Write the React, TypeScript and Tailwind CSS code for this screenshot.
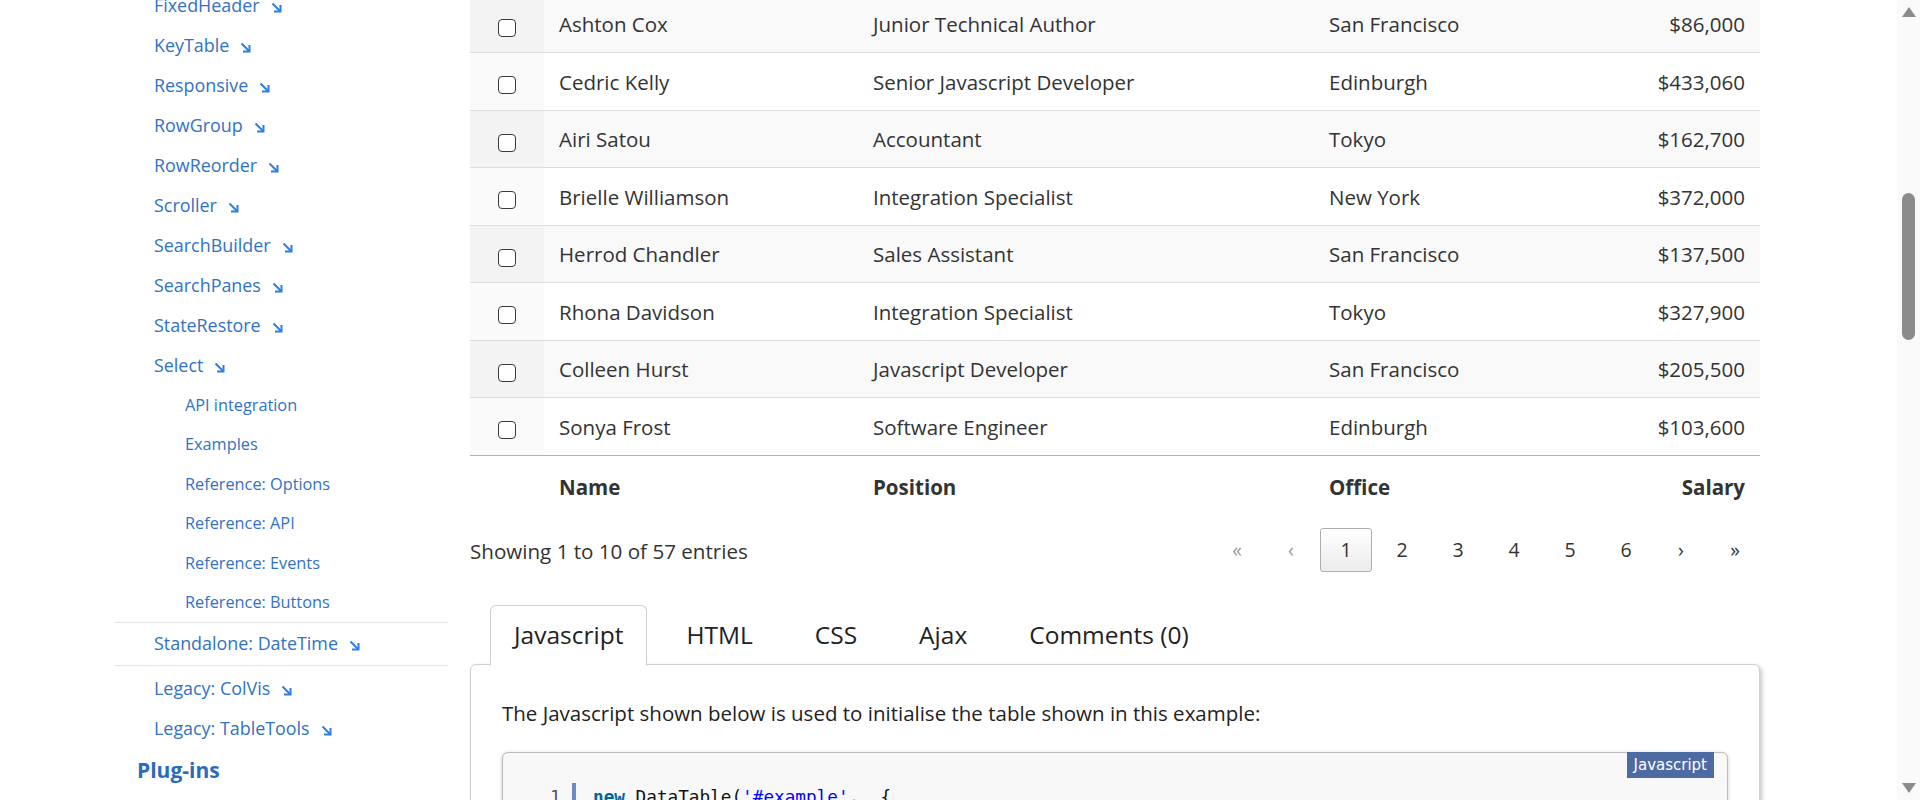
import React from 'react';

const rows = [
  ['Ashton Cox', 'Junior Technical Author', 'San Francisco', '$86,000'],
  ['Cedric Kelly', 'Senior Javascript Developer', 'Edinburgh', '$433,060'],
  ['Airi Satou', 'Accountant', 'Tokyo', '$162,700'],
  ['Brielle Williamson', 'Integration Specialist', 'New York', '$372,000'],
  ['Herrod Chandler', 'Sales Assistant', 'San Francisco', '$137,500'],
  ['Rhona Davidson', 'Integration Specialist', 'Tokyo', '$327,900'],
  ['Colleen Hurst', 'Javascript Developer', 'San Francisco', '$205,500'],
  ['Sonya Frost', 'Software Engineer', 'Edinburgh', '$103,600'],
];

const extensions = [
  'FixedHeader',
  'KeyTable',
  'Responsive',
  'RowGroup',
  'RowReorder',
  'Scroller',
  'SearchBuilder',
  'SearchPanes',
  'StateRestore',
  'Select',
];

const selectPages = [
  'API integration',
  'Examples',
  'Reference: Options',
  'Reference: API',
  'Reference: Events',
  'Reference: Buttons',
];

function Arrow() {
  return (
    <svg width="11" height="11" viewBox="0 0 11 11" className="ml-[11px] mt-[3px] shrink-0">
      <path d="M1.5 1.5 L9 9" stroke="#2b7de9" strokeWidth="2" fill="none" />
      <path d="M9.5 3 V9.5 H3" stroke="#2b7de9" strokeWidth="2" fill="none" />
    </svg>
  );
}

function NavLink({ label, arrow = true }: { label: string; arrow?: boolean }) {
  return (
    <div className="h-[40px] flex items-center pl-[39px] text-[17.9px] text-[#3172c4]">
      <span>{label}</span>
      {arrow && <Arrow />}
    </div>
  );
}

function Sidebar() {
  return (
    <div className="w-[448px] shrink-0 pl-[115px] -mt-[14.5px]">
      {extensions.map((e) => (
        <NavLink key={e} label={e} />
      ))}
      {selectPages.map((p) => (
        <div key={p} className="h-[39.4px] flex items-center pl-[70px] text-[16.3px] text-[#3172c4]">
          {p}
        </div>
      ))}
      <div className="border-t border-[#e6e6e6] h-[43px] flex items-center pl-[39px] text-[17.9px] text-[#3172c4]">
        <span>Standalone: DateTime</span>
        <Arrow />
      </div>
      <div className="border-t border-[#e6e6e6] pt-[3px]">
        <NavLink label="Legacy: ColVis" />
        <NavLink label="Legacy: TableTools" />
        <div className="h-[44px] flex items-center pl-[22px] text-[21px] font-bold text-[#2a6bbf]">
          Plug-ins
        </div>
      </div>
    </div>
  );
}

function Checkbox() {
  return <span className="block w-[18px] h-[18px] rounded-[4px] border-[1.5px] border-[#3a3a3a] bg-white translate-y-[4px]" />;
}

function DataRows() {
  return (
    <div className="-mt-[4.5px]">
      {rows.map((r, i) => {
        const odd = i % 2 === 0;
        const last = i === rows.length - 1;
        return (
          <div
            key={r[0]}
            className={`grid grid-cols-[74px_314px_456px_246px_200px] h-[57.5px] border-b ${
              last ? 'border-[#b3b3b3]' : 'border-[#dddddd]'
            } ${odd ? 'bg-[#f9f9f9]' : 'bg-white'} text-[20.5px] text-[#333]`}
          >
            <div className={`flex items-center justify-center ${odd ? 'bg-[#f3f3f3]' : 'bg-[#fafafa]'}`}>
              <Checkbox />
            </div>
            <div className="flex items-center px-[15px] pt-[2px]">{r[0]}</div>
            <div className="flex items-center px-[15px] pt-[2px]">{r[1]}</div>
            <div className="flex items-center px-[15px] pt-[2px]">{r[2]}</div>
            <div className="flex items-center justify-end px-[15px] pt-[2px]">{r[3]}</div>
          </div>
        );
      })}
      <div className="grid grid-cols-[74px_314px_456px_246px_200px] h-[64px] text-[20.5px] font-bold text-[#333]">
        <div />
        <div className="flex items-center px-[15px]">Name</div>
        <div className="flex items-center px-[15px]">Position</div>
        <div className="flex items-center px-[15px]">Office</div>
        <div className="flex items-center justify-end px-[15px]">Salary</div>
      </div>
    </div>
  );
}

function Pager() {
  const btn = 'h-[44px] flex items-center justify-center text-[19.5px]';
  return (
    <div className="flex gap-[4px]">
      <span className={`${btn} w-[50px] text-[#999]`}>«</span>
      <span className={`${btn} w-[50px] text-[#999]`}>‹</span>
      <span className={`${btn} w-[52px] text-[#333] border border-[#adadad] rounded-[3px] bg-gradient-to-b from-white to-[#ececec]`}>
        1
      </span>
      {['2', '3', '4', '5', '6'].map((n) => (
        <span key={n} className={`${btn} w-[52px] text-[#333]`}>
          {n}
        </span>
      ))}
      <span className={`${btn} w-[50px] text-[#333]`}>›</span>
      <span className={`${btn} w-[50px] text-[#333]`}>»</span>
    </div>
  );
}

function Tabs() {
  const tabs = ['Javascript', 'HTML', 'CSS', 'Ajax', 'Comments (0)'];
  return (
    <div className="flex gap-[16px] pl-[20px] h-[60px] relative z-10">
      {tabs.map((t, i) => (
        <div
          key={t}
          className={`flex items-center text-[24.5px] text-[#222] ${
            i === 0 ? 'h-[61px] bg-white border border-[#cfcfcf] border-b-white rounded-t-[6px] px-[23px]' : 'h-[60px] px-[23px]'
          }`}
        >
          {t}
        </div>
      ))}
    </div>
  );
}

function CodePanel() {
  return (
    <div className="border border-[#cfcfcf] rounded-[6px] bg-white shadow-[2px_2px_4px_rgba(0,0,0,0.22)] px-[31px] pt-[33px] h-[200px]">
      <p className="text-[20.5px] text-[#222] leading-[30px]">
        The Javascript shown below is used to initialise the table shown in this example:
      </p>
      <div className="mt-[24px] relative border border-[#bdbdbd] rounded-[6px] bg-[#f8f8f8] shadow-[0_1px_4px_rgba(0,0,0,0.2)] h-[120px] pt-[30px] pl-[47px]">
        <span className="absolute top-[-1px] right-[13px] h-[26px] px-[7px] flex items-center bg-[#4e6aa3] text-white text-[15px] font-['DejaVu_Sans',sans-serif]">
          Javascript
        </span>
        <div className="flex items-center font-['DejaVu_Sans_Mono',monospace] text-[17.7px] leading-[28px]">
          <span className="text-[#555] w-[12px]">1</span>
          <span className="ml-[10px] w-[4px] h-[28px] bg-[#6c8cc8]" />
          <span className="ml-[17px] text-[#006699] font-bold">new</span>
          <span className="text-[#111]">&nbsp;DataTable(</span>
          <span className="text-[#0000ff]">'#example'</span>
          <span className="text-[#111]">,&nbsp;&nbsp;&#123;</span>
        </div>
      </div>
    </div>
  );
}

function Scrollbar() {
  return (
    <div className="w-[23px] h-full bg-[#fafafa] ml-auto flex flex-col items-center">
      <svg width="14" height="10" viewBox="0 0 14 10" className="mt-[7px]">
        <polygon points="7,0 14,10 0,10" fill="#8b8b8b" />
      </svg>
      <div className="mt-[176px] w-[13px] h-[147px] rounded-full bg-[#8b8b8b]" />
      <svg width="14" height="10" viewBox="0 0 14 10" className="mt-auto mb-[7px]">
        <polygon points="0,0 14,0 7,10" fill="#8b8b8b" />
      </svg>
    </div>
  );
}

export default function App() {
  return (
    <div className="w-[1920px] h-[800px] overflow-hidden flex bg-white font-['Open_Sans','Noto_Sans',sans-serif]">
      <Sidebar />
      <div className="w-[1290px] ml-[22px] shrink-0">
        <DataRows />
        <div className="mt-[8.5px] h-[44px] flex items-center justify-between">
          <span className="text-[20.6px] text-[#333] pt-[3px]">Showing 1 to 10 of 57 entries</span>
          <Pager />
        </div>
        <div className="mt-[33px]">
          <Tabs />
          <div className="-mt-[1px]">
            <CodePanel />
          </div>
        </div>
      </div>
      <Scrollbar />
    </div>
  );
}
